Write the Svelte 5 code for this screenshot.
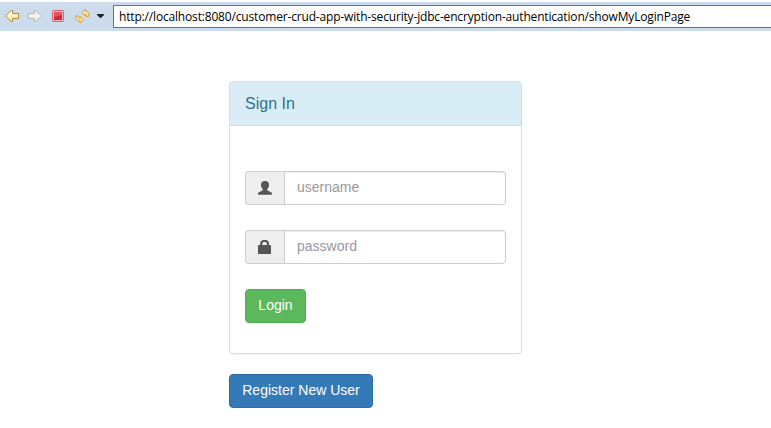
<script>
  let username = $state('');
  let password = $state('');
</script>

<div class="page">
  <header class="toolbar">
    <svg class="tools" width="113" height="29" viewBox="0 2 113 29" aria-hidden="true">
      <defs>
        <linearGradient id="gold" x1="0" y1="0" x2="0" y2="1">
          <stop offset="0" stop-color="#fffef0" />
          <stop offset="1" stop-color="#ffe79c" />
        </linearGradient>
      </defs>
      <path d="M5.5 16 L11 10.5 H12.5 V13.5 H18.5 V18.5 H12.5 V21.5 H11 Z" fill="url(#gold)" stroke="#b88628" stroke-linejoin="round" />
      <path d="M41.5 16 L36 10.5 H34.5 V13.5 H28.5 V18.5 H34.5 V21.5 H36 Z" fill="#f0f0ee" stroke="#b5b5b5" stroke-linejoin="round" />
      <rect x="52.5" y="10.5" width="11" height="11" rx="0.7" fill="#f3b9c0" stroke="#cf6673" />
      <rect x="54" y="12" width="8" height="8" fill="#d92535" />
      <path d="M54 12 H62 V15 L54 17 Z" fill="#e4525b" />
      <path d="M81.8 12.6 L85.3 9.2 V11 C88 11 89.3 13 88.7 16.5 H86.2 C86.5 14.8 86.2 14 85.3 14 V15.8 Z" fill="#ffe49a" stroke="#cf9a3e" stroke-width=".9" stroke-linejoin="round" />
      <path d="M83.6 19.6 L80.1 23 V21.2 C77 21.2 75.2 19.3 75.8 15.8 H78.2 C78 17.5 78.7 18.2 80.1 18.2 V16.4 Z" fill="#ffe49a" stroke="#cf9a3e" stroke-width=".9" stroke-linejoin="round" />
      <path d="M97 14 H104 V15 L100.5 18.3 L97 15 Z" fill="#222" />
    </svg>
    <div class="address"><span>http://localhost:8080/customer-crud-app-with-security-jdbc-encryption-authentication/showMyLoginPage</span></div>
  </header>

  <main>
    <section class="panel">
      <div class="heading">Sign In</div>
      <form onsubmit={(e) => e.preventDefault()}>
        <label class="group">
          <span class="addon">
            <svg width="14" height="14" viewBox="0 0 14 14" fill="#555">
              <path d="M7 0 C9.8 0 11 1.6 11 3.7 C11 5.7 10.2 7.2 9.2 8.2 V9.2 C10.4 10.1 12.8 10.5 13.6 11.7 Q14 12.4 14 13.8 H0 Q0 12.4 .4 11.7 C1.2 10.5 3.6 10.1 4.8 9.2 V8.2 C3.8 7.2 3 5.7 3 3.7 C3 1.6 4.2 0 7 0 Z" />
            </svg>
          </span>
          <input type="text" placeholder="username" bind:value={username} />
        </label>
        <label class="group">
          <span class="addon">
            <svg width="14" height="14" viewBox="0 0 14 14" fill="#555">
              <path fill-rule="evenodd" d="M2.2 5 V3.5 C2.2 1.3 3.7 0 5.5 0 H7.7 C9.6 0 11 1.3 11 3.5 V5 H12.4 Q13 5 13 5.6 V13.4 Q13 14 12.4 14 H.6 Q0 14 0 13.4 V5.6 Q0 5 .6 5 Z M4.3 5 H8.9 V3.8 Q8.9 2 7.4 2 H5.8 Q4.3 2 4.3 3.8 Z" />
            </svg>
          </span>
          <input type="password" placeholder="password" bind:value={password} />
        </label>
        <button class="btn login" type="submit">Login</button>
      </form>
    </section>
    <button class="btn register" type="button">Register New User</button>
  </main>
</div>

<style>
  .page {
    height: 428px;
    box-sizing: border-box;
    padding-top: 2px;
    overflow: hidden;
    background: #fff;
    font: 14px/20px "Liberation Sans", Arial, sans-serif;
  }
  .toolbar {
    display: flex;
    height: 29px;
    background: #cddcec;
  }
  .tools {
    flex: none;
    display: block;
  }
  .address {
    flex: 1;
    box-sizing: border-box;
    height: 23px;
    margin-top: 3px;
    padding-left: 5px;
    border: 1px solid #707070;
    border-right: 0;
    background: #fff;
    color: #000;
    font: 12px/21px "Open Sans", "Noto Sans", sans-serif;
    letter-spacing: -0.17px;
    white-space: nowrap;
  }
  main {
    width: 293px;
    margin: 50px 0 0 229px;
  }
  .panel {
    box-sizing: border-box;
    height: 273px;
    border: 1px solid #bce8f1;
    border-radius: 4px;
    box-shadow: 0 1px 1px rgba(0, 0, 0, 0.05);
  }
  .heading {
    box-sizing: border-box;
    height: 44px;
    padding: 13px 15px 12px;
    border-bottom: 1px solid #bce8f1;
    border-radius: 3px 3px 0 0;
    background: #d9edf7;
    color: #31708f;
    font-size: 16px;
    line-height: 18px;
  }
  form {
    padding: 45px 15px 0;
  }
  .group {
    display: flex;
    height: 34px;
    margin-bottom: 25px;
  }
  .addon {
    box-sizing: border-box;
    width: 39px;
    padding: 9px 0 0 12px;
    border: 1px solid #ccc;
    border-right: 0;
    border-radius: 4px 0 0 4px;
    background: #eee;
  }
  .addon svg {
    display: block;
  }
  input {
    flex: 1;
    min-width: 0;
    box-sizing: border-box;
    margin: 0;
    padding: 5px 12px 7px;
    border: 1px solid #ccc;
    border-radius: 0 4px 4px 0;
    background: #fff;
    box-shadow: inset 0 1px 1px rgba(0, 0, 0, 0.075);
    color: #555;
    font: inherit;
    outline: 0;
  }
  input::placeholder {
    color: #999;
    opacity: 1;
  }
  .btn {
    display: block;
    box-sizing: border-box;
    height: 34px;
    margin: 0;
    padding: 5px 0 7px;
    border-radius: 4px;
    color: #fff;
    font: inherit;
    text-align: center;
  }
  .login {
    width: 61px;
    border: 1px solid #4cae4c;
    background: #5cb85c;
  }
  .register {
    width: 144px;
    margin-top: 20px;
    border: 1px solid #2e6da4;
    background: #337ab7;
  }
</style>
